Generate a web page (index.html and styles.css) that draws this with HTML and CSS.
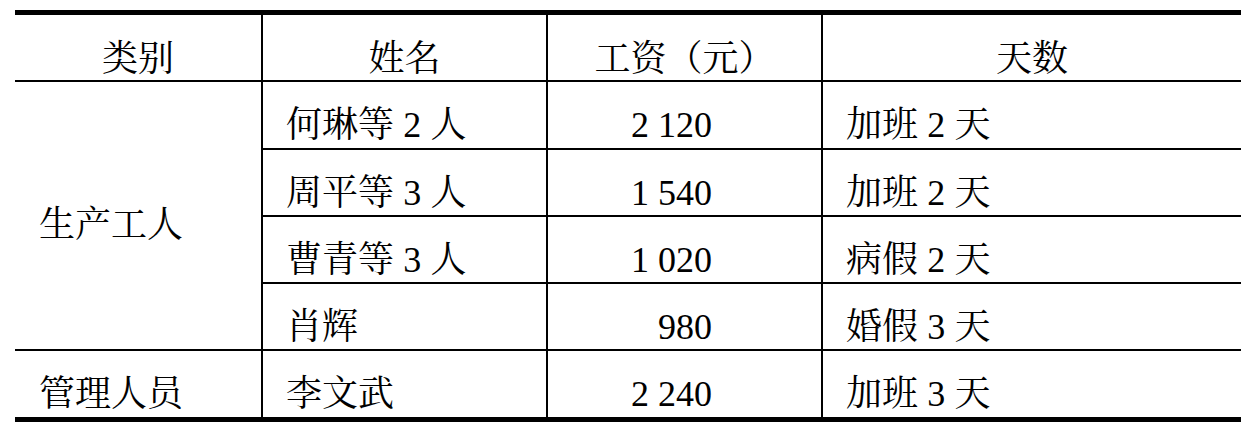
FILE: index.html
```html
<!DOCTYPE html>
<html>
<head>
<meta charset="utf-8">
<title>工资表</title>
<link rel="stylesheet" href="styles.css">
</head>
<body>
<div class="wage">
  <p class="cell head vline">类别</p>
  <p class="cell head vline">姓名</p>
  <p class="cell head vline">工资（元）</p>
  <p class="cell head">天数</p>

  <p class="cell cat vline">生产工人</p>
  <p class="cell name vline hline">何琳等 <span class="lat">2</span> 人</p>
  <p class="cell num vline hline"><span class="lat">2 120</span></p>
  <p class="cell days hline">加班 <span class="lat">2</span> 天</p>

  <p class="cell name vline hline">周平等 <span class="lat">3</span> 人</p>
  <p class="cell num vline hline"><span class="lat">1 540</span></p>
  <p class="cell days hline">加班 <span class="lat">2</span> 天</p>

  <p class="cell name vline hline">曹青等 <span class="lat">3</span> 人</p>
  <p class="cell num vline hline"><span class="lat">1 020</span></p>
  <p class="cell days hline">病假 <span class="lat">2</span> 天</p>

  <p class="cell name vline hline">肖辉</p>
  <p class="cell num vline hline"><span class="lat">980</span></p>
  <p class="cell days hline">婚假 <span class="lat">3</span> 天</p>

  <p class="cell cat2 vline">管理人员</p>
  <p class="cell name vline">李文武</p>
  <p class="cell num vline"><span class="lat">2 240</span></p>
  <p class="cell days">加班 <span class="lat">3</span> 天</p>
</div>
</body>
</html>
```

FILE: styles.css
```css
body {
  margin: 0;
  font-size: 36px;
  color: #000;
  background: #fff;
}

.cell { font-family: "Noto Serif CJK SC", "Noto Sans CJK SC", serif; }
.lat { font-family: "Liberation Serif", "Noto Serif CJK SC", serif; }

.wage {
  margin: 10px 0 0 15px;
  width: 1226px;
  display: grid;
  grid-template-columns: 248px 285px 275px 418px;
  grid-template-rows: 67px 68px 67px 67px 67px 66px;
  border-top: 5px solid #000;
  border-bottom: 5px solid #000;
}

.cell {
  margin: 0;
  box-sizing: border-box;
  line-height: 40px;
  white-space: nowrap;
  padding-top: 20px;
}

.vline { border-right: 2px solid #000; }
.hline { border-bottom: 2px solid #000; }

.head {
  text-align: center;
  padding-top: 21px;
  border-bottom: 2px solid #000;
}

.cat {
  grid-row: span 4;
  padding-left: 24px;
  padding-top: 120px;
  border-bottom: 2px solid #000;
}

.cat2 { padding-left: 24px; }

.name,
.days { padding-left: 23px; }

.num {
  text-align: right;
  padding-right: 109px;
}
```
